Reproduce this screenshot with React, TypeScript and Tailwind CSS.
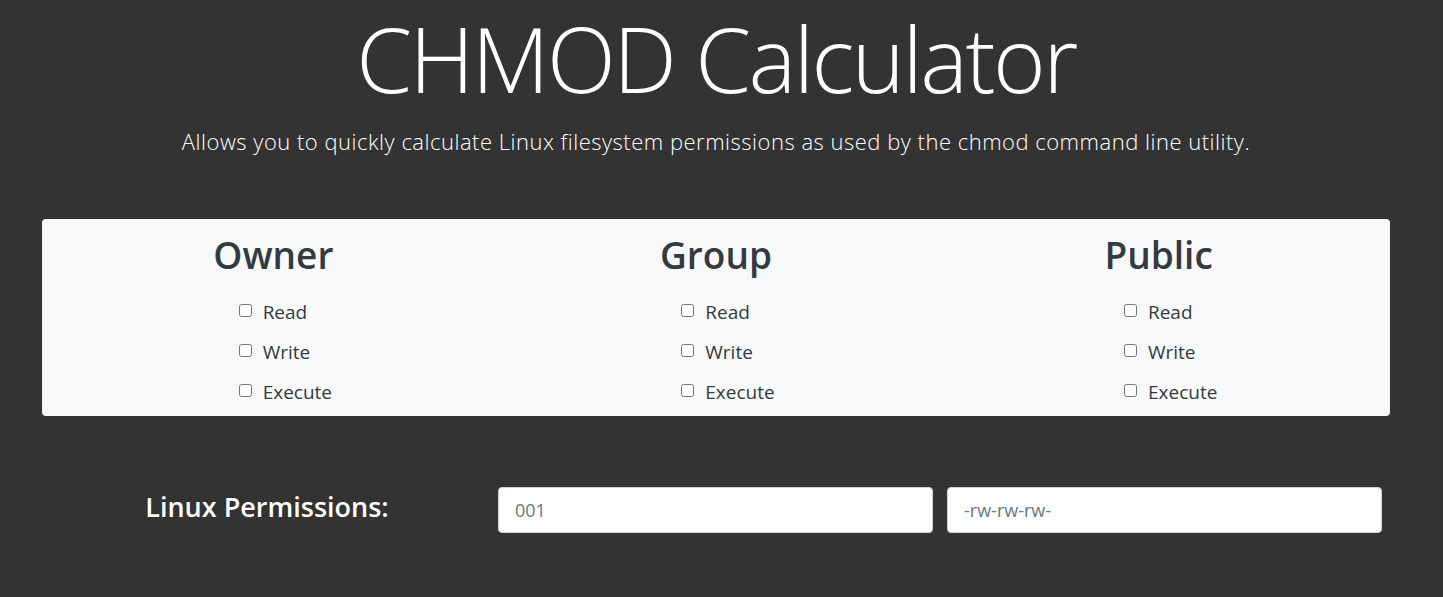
import { useState } from 'react';

const perms = ['Read', 'Write', 'Execute'];
const groups = ['Owner', 'Group', 'Public'];

function PermColumn({ title }: { title: string }) {
  const [checked, setChecked] = useState<boolean[]>([false, false, false]);

  return (
    <div className="flex flex-col items-center">
      <h2 className="text-[37px] font-semibold leading-[1.2] text-[#343a40] mt-[14px] mb-[15px]">{title}</h2>
      <div className="flex flex-col pl-6">
        {perms.map((p, i) => (
          <label key={p} className="flex items-center h-[40px] text-[19px] text-[#343a40]">
            <input
              type="checkbox"
              className="w-[13px] h-[13px] mr-[11px] -mt-[4px]"
              checked={checked[i]}
              onChange={() => setChecked(checked.map((c, j) => (j === i ? !c : c)))}
            />
            {p}
          </label>
        ))}
      </div>
    </div>
  );
}

export default function App() {
  return (
    <main
      className="min-h-screen bg-[#333333] text-white pb-10"
      style={{ fontFamily: '"Open Sans", "Noto Sans", sans-serif' }}
    >
      <div className="text-center pt-[4px] pr-[11px]">
        <h1 className="text-[90px] font-light leading-[1.2] tracking-[-2.5px]">CHMOD Calculator</h1>
        <p className="text-[22px] font-light mt-[13px] tracking-[0.5px]">
          Allows you to quickly calculate Linux filesystem permissions as used by the chmod command line utility.
        </p>
      </div>

      <div className="ml-[42px] mr-[53px] mt-[61px] h-[197px] rounded bg-[#f8f9fa] px-[10px] grid grid-cols-3">
        {groups.map((g) => (
          <PermColumn key={g} title={g} />
        ))}
      </div>

      <div className="flex items-center px-[42px] mt-[71px]">
        <div className="w-[450px] text-center text-[27px] font-semibold -mt-[6px]">Linux Permissions:</div>
        <div className="flex gap-[14px] ml-[6px]">
          <input
            className="w-[435px] h-[46px] rounded bg-white border border-[#ced4da] px-4 text-[18px] text-[#495057] placeholder:text-[#6c757d]"
            placeholder="001"
          />
          <input
            className="w-[435px] h-[46px] rounded bg-white border border-[#ced4da] px-4 text-[18px] text-[#495057] placeholder:text-[#6c757d]"
            placeholder="-rw-rw-rw-"
          />
        </div>
      </div>
    </main>
  );
}
